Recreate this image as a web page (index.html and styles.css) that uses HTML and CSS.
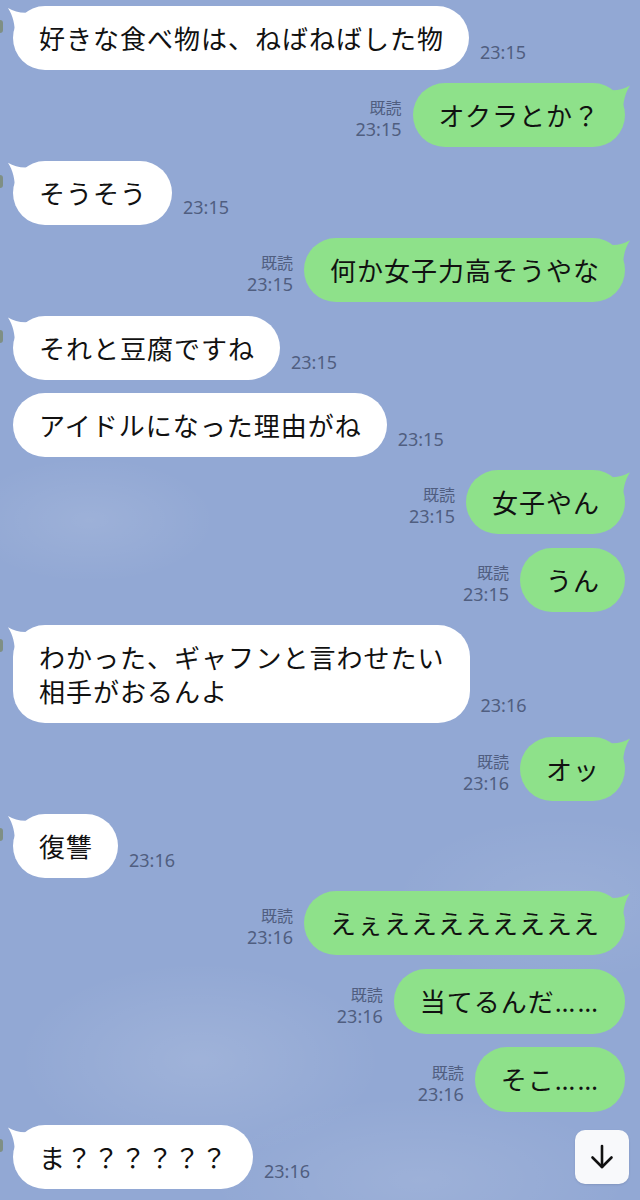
FILE: index.html
```html
<!DOCTYPE html>
<html lang="ja">
<head>
<meta charset="utf-8">
<link rel="stylesheet" href="styles.css">
</head>
<body>
<div class="chat">
  <div class="row in"><span class="avatar"></span><div class="bubble">好きな食べ物は、ねばねばした物</div><div class="meta"><span class="time">23:15</span></div></div>
  <div class="row out"><div class="meta"><span class="read">既読</span><span class="time">23:15</span></div><div class="bubble">オクラとか？</div></div>
  <div class="row in"><span class="avatar"></span><div class="bubble">そうそう</div><div class="meta"><span class="time">23:15</span></div></div>
  <div class="row out"><div class="meta"><span class="read">既読</span><span class="time">23:15</span></div><div class="bubble">何か女子力高そうやな</div></div>
  <div class="row in"><span class="avatar"></span><div class="bubble">それと豆腐ですね</div><div class="meta"><span class="time">23:15</span></div></div>
  <div class="row in"><div class="bubble notail">アイドルになった理由がね</div><div class="meta"><span class="time">23:15</span></div></div>
  <div class="row out"><div class="meta"><span class="read">既読</span><span class="time">23:15</span></div><div class="bubble">女子やん</div></div>
  <div class="row out"><div class="meta"><span class="read">既読</span><span class="time">23:15</span></div><div class="bubble notail">うん</div></div>
  <div class="row in"><span class="avatar"></span><div class="bubble">わかった、ギャフンと言わせたい<br>相手がおるんよ</div><div class="meta"><span class="time">23:16</span></div></div>
  <div class="row out"><div class="meta"><span class="read">既読</span><span class="time">23:16</span></div><div class="bubble">オッ</div></div>
  <div class="row in"><span class="avatar"></span><div class="bubble">復讐</div><div class="meta"><span class="time">23:16</span></div></div>
  <div class="row out"><div class="meta"><span class="read">既読</span><span class="time">23:16</span></div><div class="bubble">えぇええええええええ</div></div>
  <div class="row out"><div class="meta"><span class="read">既読</span><span class="time">23:16</span></div><div class="bubble notail">当てるんだ<span class="dots">……</span></div></div>
  <div class="row out"><div class="meta"><span class="read">既読</span><span class="time">23:16</span></div><div class="bubble notail">そこ<span class="dots">……</span></div></div>
  <div class="row in"><span class="avatar"></span><div class="bubble">ま？？？？？？</div><div class="meta"><span class="time">23:16</span></div></div>
</div>
<button class="down" aria-label="scroll down">
  <svg width="28" height="28" viewBox="0 0 28 28" fill="none" stroke="#111" stroke-width="2.6" stroke-linecap="round" stroke-linejoin="round"><path d="M14 3v21"/><path d="M4.5 14.5L14 24l9.5-9.5"/></svg>
</button>
</body>
</html>
```

FILE: styles.css
```css
html, body {
  margin: 0;
  padding: 0;
}
body {
  width: 640px;
  height: 1200px;
  overflow: hidden;
  position: relative;
  font-family: "Noto Sans CJK JP", "Noto Sans", sans-serif;
  background-color: #92a8d4;
  background-image:
    radial-gradient(ellipse 180px 90px at 90px 520px, rgba(255,255,255,0.10), rgba(255,255,255,0) 70%),
    radial-gradient(ellipse 260px 140px at 200px 1060px, rgba(255,255,255,0.12), rgba(255,255,255,0) 70%),
    radial-gradient(ellipse 240px 120px at 560px 900px, rgba(255,255,255,0.08), rgba(255,255,255,0) 70%),
    radial-gradient(ellipse 300px 120px at 420px 1180px, rgba(255,255,255,0.10), rgba(255,255,255,0) 70%);
}
.chat {
  display: flex;
  flex-direction: column;
  gap: 13.4px;
  padding: 6px 15px 0 0;
}
.row {
  display: flex;
  align-items: flex-end;
}
.row.in {
  padding-left: 13px;
}
.row.in .avatar {
  align-self: flex-start;
  width: 3px;
  height: 13px;
  margin: 14px 10px 0 -13px;
  background: #7f8f84;
  border-radius: 0 3px 3px 0;
}
.row.out {
  justify-content: flex-end;
}
.bubble {
  position: relative;
  font-size: 26px;
  letter-spacing: 1px;
  line-height: 34px;
  color: #111;
  padding: 15px 25px 15px 26px;
  border-radius: 32px;
  white-space: nowrap;
}
.dots {
  font-family: "Noto Sans", sans-serif;
  letter-spacing: 2px;
}
.row.in .bubble {
  background: #fff;
}
.row.out .bubble {
  background: #8ee18a;
}
.row.in .bubble::before,
.row.out .bubble::before {
  content: "";
  position: absolute;
  top: 0;
  width: 30px;
  height: 30px;
  background: inherit;
}
.row .bubble.notail::before {
  display: none;
}
.row.in .bubble::before {
  left: -6px;
  clip-path: path("M1 2 C 8 6, 16 8, 26 6 L 26 30 L 8 30 C 8 18, 6 10, 1 2 Z");
}
.row.out .bubble::before {
  right: -6px;
  clip-path: path("M29 2 C 22 6, 14 8, 4 6 L 4 30 L 22 30 C 22 18, 24 10, 29 2 Z");
}
.meta {
  display: flex;
  flex-direction: column;
  margin-bottom: 7px;
  color: #505e80;
  font-family: "Noto Sans", "Noto Sans CJK JP", sans-serif;
}
.row.in .meta {
  margin-left: 11px;
  align-items: flex-start;
}
.row.out .meta {
  margin-right: 11px;
  align-items: flex-end;
}
.read {
  font-size: 16px;
  line-height: 22px;
  font-family: "Noto Sans CJK JP", sans-serif;
}
.time {
  font-size: 18px;
  line-height: 22px;
}
.down {
  position: absolute;
  left: 575px;
  top: 1130px;
  width: 54px;
  height: 54px;
  border: none;
  border-radius: 10px;
  background: #f8f9fb;
  box-shadow: 0 1px 2px rgba(40, 50, 80, 0.15);
  display: flex;
  align-items: center;
  justify-content: center;
  padding: 0;
}
```
